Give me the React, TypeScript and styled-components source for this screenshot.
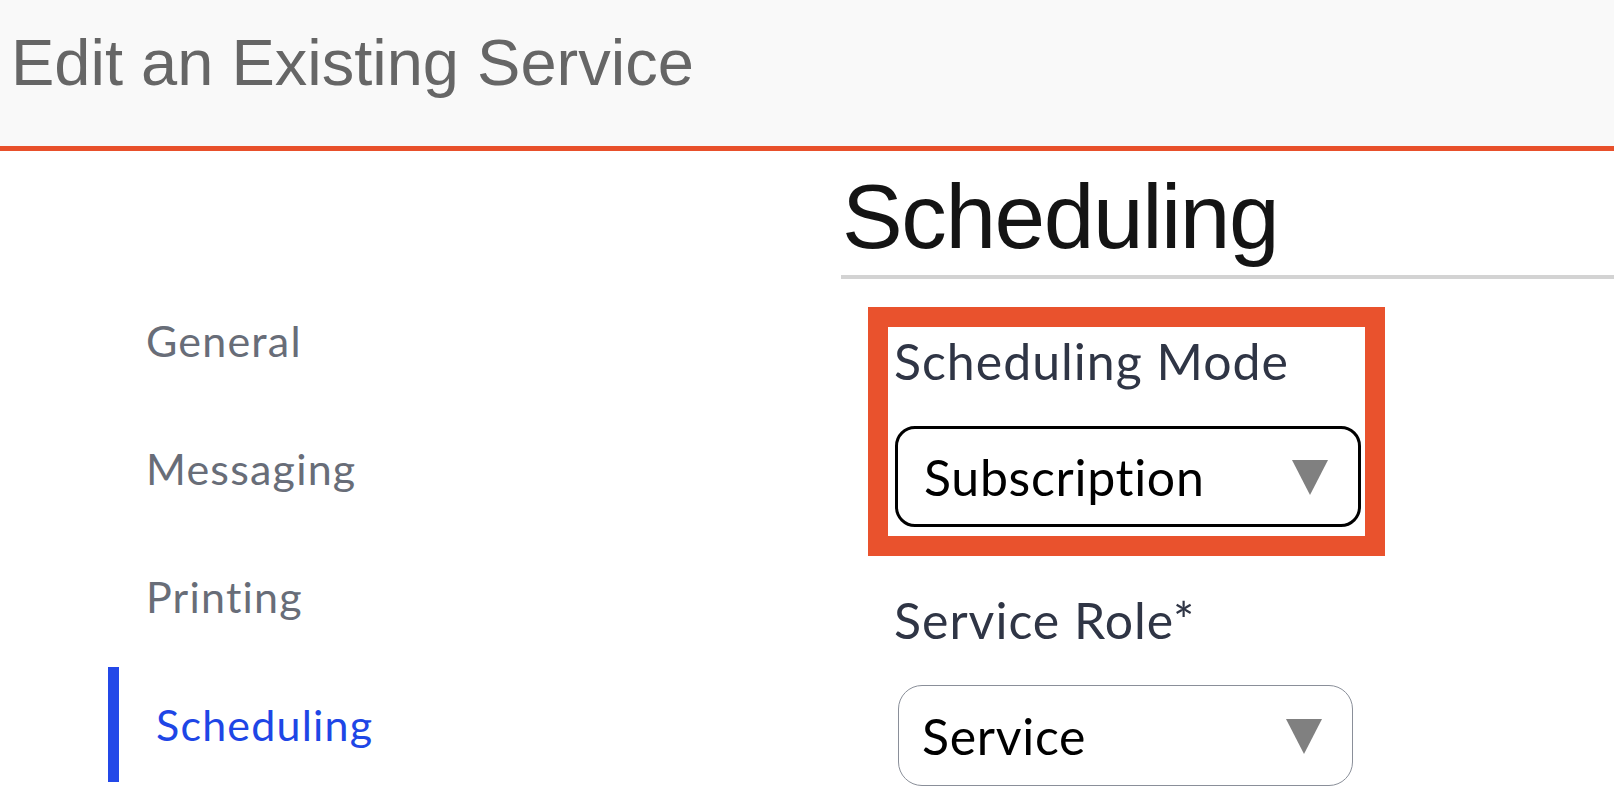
import React from 'react';
import styled, { createGlobalStyle } from 'styled-components';

const GlobalStyle = createGlobalStyle`
  html, body {
    margin: 0;
    padding: 0;
    background: #ffffff;
    overflow: hidden;
  }
  * {
    box-sizing: border-box;
  }
`;

const navItems = ['General', 'Messaging', 'Printing', 'Scheduling'];

function Caret() {
  return (
    <CaretIcon viewBox='0 0 36 36' aria-hidden='true'>
      <polygon points='0,1 36,1 18,36' fill='#808080' />
    </CaretIcon>
  );
}

interface SelectProps {
  value: string;
  focused?: boolean;
}

function SelectBox({ value, focused }: SelectProps) {
  return (
    <Select $focused={focused}>
      <span className='select-value'>{value}</span>
      <Caret />
    </Select>
  );
}

export default function App() {
  const active = 'Scheduling';
  return (
    <Page>
      <GlobalStyle />
      <Header>
        <Title>Edit an Existing Service</Title>
      </Header>
      <Body>
        <Sidebar>
          <NavList>
            {navItems.map((item) => (
              <NavItem key={item} $active={item === active}>
                {item}
              </NavItem>
            ))}
          </NavList>
        </Sidebar>
        <Content>
          <SectionHeading>Scheduling</SectionHeading>
          <FieldGroup>
            <Field $highlighted>
              <Label>Scheduling Mode</Label>
              <SelectBox value='Subscription' focused />
            </Field>
            <Field>
              <Label>Service Role*</Label>
              <SelectBox value='Service' />
            </Field>
          </FieldGroup>
        </Content>
      </Body>
    </Page>
  );
}

const Page = styled.div`
  width: 1614px;
  height: 798px;
  display: flex;
  flex-direction: column;
  overflow: hidden;
`;

const Header = styled.header`
  height: 151px;
  flex-shrink: 0;
  background: #f9f9f9;
  border-bottom: 5px solid #e8502b;
  padding: 30px 0 0 11px;
`;

const Title = styled.h1`
  margin: 0;
  font-family: 'Liberation Sans', Arial, sans-serif;
  font-weight: 400;
  font-size: 65px;
  line-height: 1;
  letter-spacing: 0;
  color: #666666;
`;

const Body = styled.div`
  flex: 1;
  display: flex;
`;

const Sidebar = styled.nav`
  width: 841px;
  flex-shrink: 0;
  padding: 132px 0 0 108px;
`;

const NavList = styled.ul`
  list-style: none;
  margin: 0;
  padding: 0;
  display: flex;
  flex-direction: column;
  gap: 13px;
`;

const NavItem = styled.li<{ $active?: boolean }>`
  height: 115px;
  display: flex;
  align-items: center;
  padding-left: ${({ $active }) => ($active ? '37px' : '38px')};
  border-left: ${({ $active }) => ($active ? '11px solid #2348e8' : 'none')};
  font-family: Lato, 'Open Sans', sans-serif;
  font-size: 43px;
  line-height: 1.2;
  letter-spacing: 1.2px;
  color: ${({ $active }) => ($active ? '#1e46e6' : '#686d78')};
`;

const Content = styled.main`
  flex: 1;
  display: flex;
  flex-direction: column;
  padding-top: 20px;
`;

const SectionHeading = styled.h2`
  margin: 0;
  padding: 0 0 13px 1px;
  border-bottom: 4px solid #d3d3d3;
  font-family: 'Liberation Sans', Arial, sans-serif;
  font-weight: 400;
  font-size: 91px;
  line-height: 1;
  letter-spacing: -1.4px;
  color: #141414;
`;

const FieldGroup = styled.div`
  display: flex;
  flex-direction: column;
  align-items: flex-start;
  gap: 50px;
  margin-top: 48px;
  padding-left: 47px;
`;

const Field = styled.div<{ $highlighted?: boolean }>`
  display: flex;
  flex-direction: column;
  gap: 35px;
  padding: 4px 4px 9px 6px;
  outline: ${({ $highlighted }) => ($highlighted ? '20px solid #e9522d' : 'none')};
`;

const Label = styled.label`
  font-family: Lato, 'Open Sans', sans-serif;
  font-size: 50px;
  line-height: 1.2;
  letter-spacing: 1px;
  color: #2f3545;
`;

const Select = styled.div<{ $focused?: boolean }>`
  display: flex;
  align-items: center;
  justify-content: space-between;
  height: 101px;
  width: ${({ $focused }) => ($focused ? '466px' : '455px')};
  margin-left: ${({ $focused }) => ($focused ? '1px' : '4px')};
  padding: 0 30px 0 ${({ $focused }) => ($focused ? '26px' : '23px')};
  border: ${({ $focused }) => ($focused ? '3.5px solid #000000' : '1.5px solid #8a8f99')};
  border-radius: ${({ $focused }) => ($focused ? '20px' : '24px')};
  background: #ffffff;
  .select-value {
    font-family: Lato, 'Open Sans', sans-serif;
    font-size: 50px;
    line-height: 1.2;
    letter-spacing: 0.7px;
    color: #000000;
  }
`;

const CaretIcon = styled.svg`
  width: 36px;
  height: 36px;
  flex-shrink: 0;
`;
